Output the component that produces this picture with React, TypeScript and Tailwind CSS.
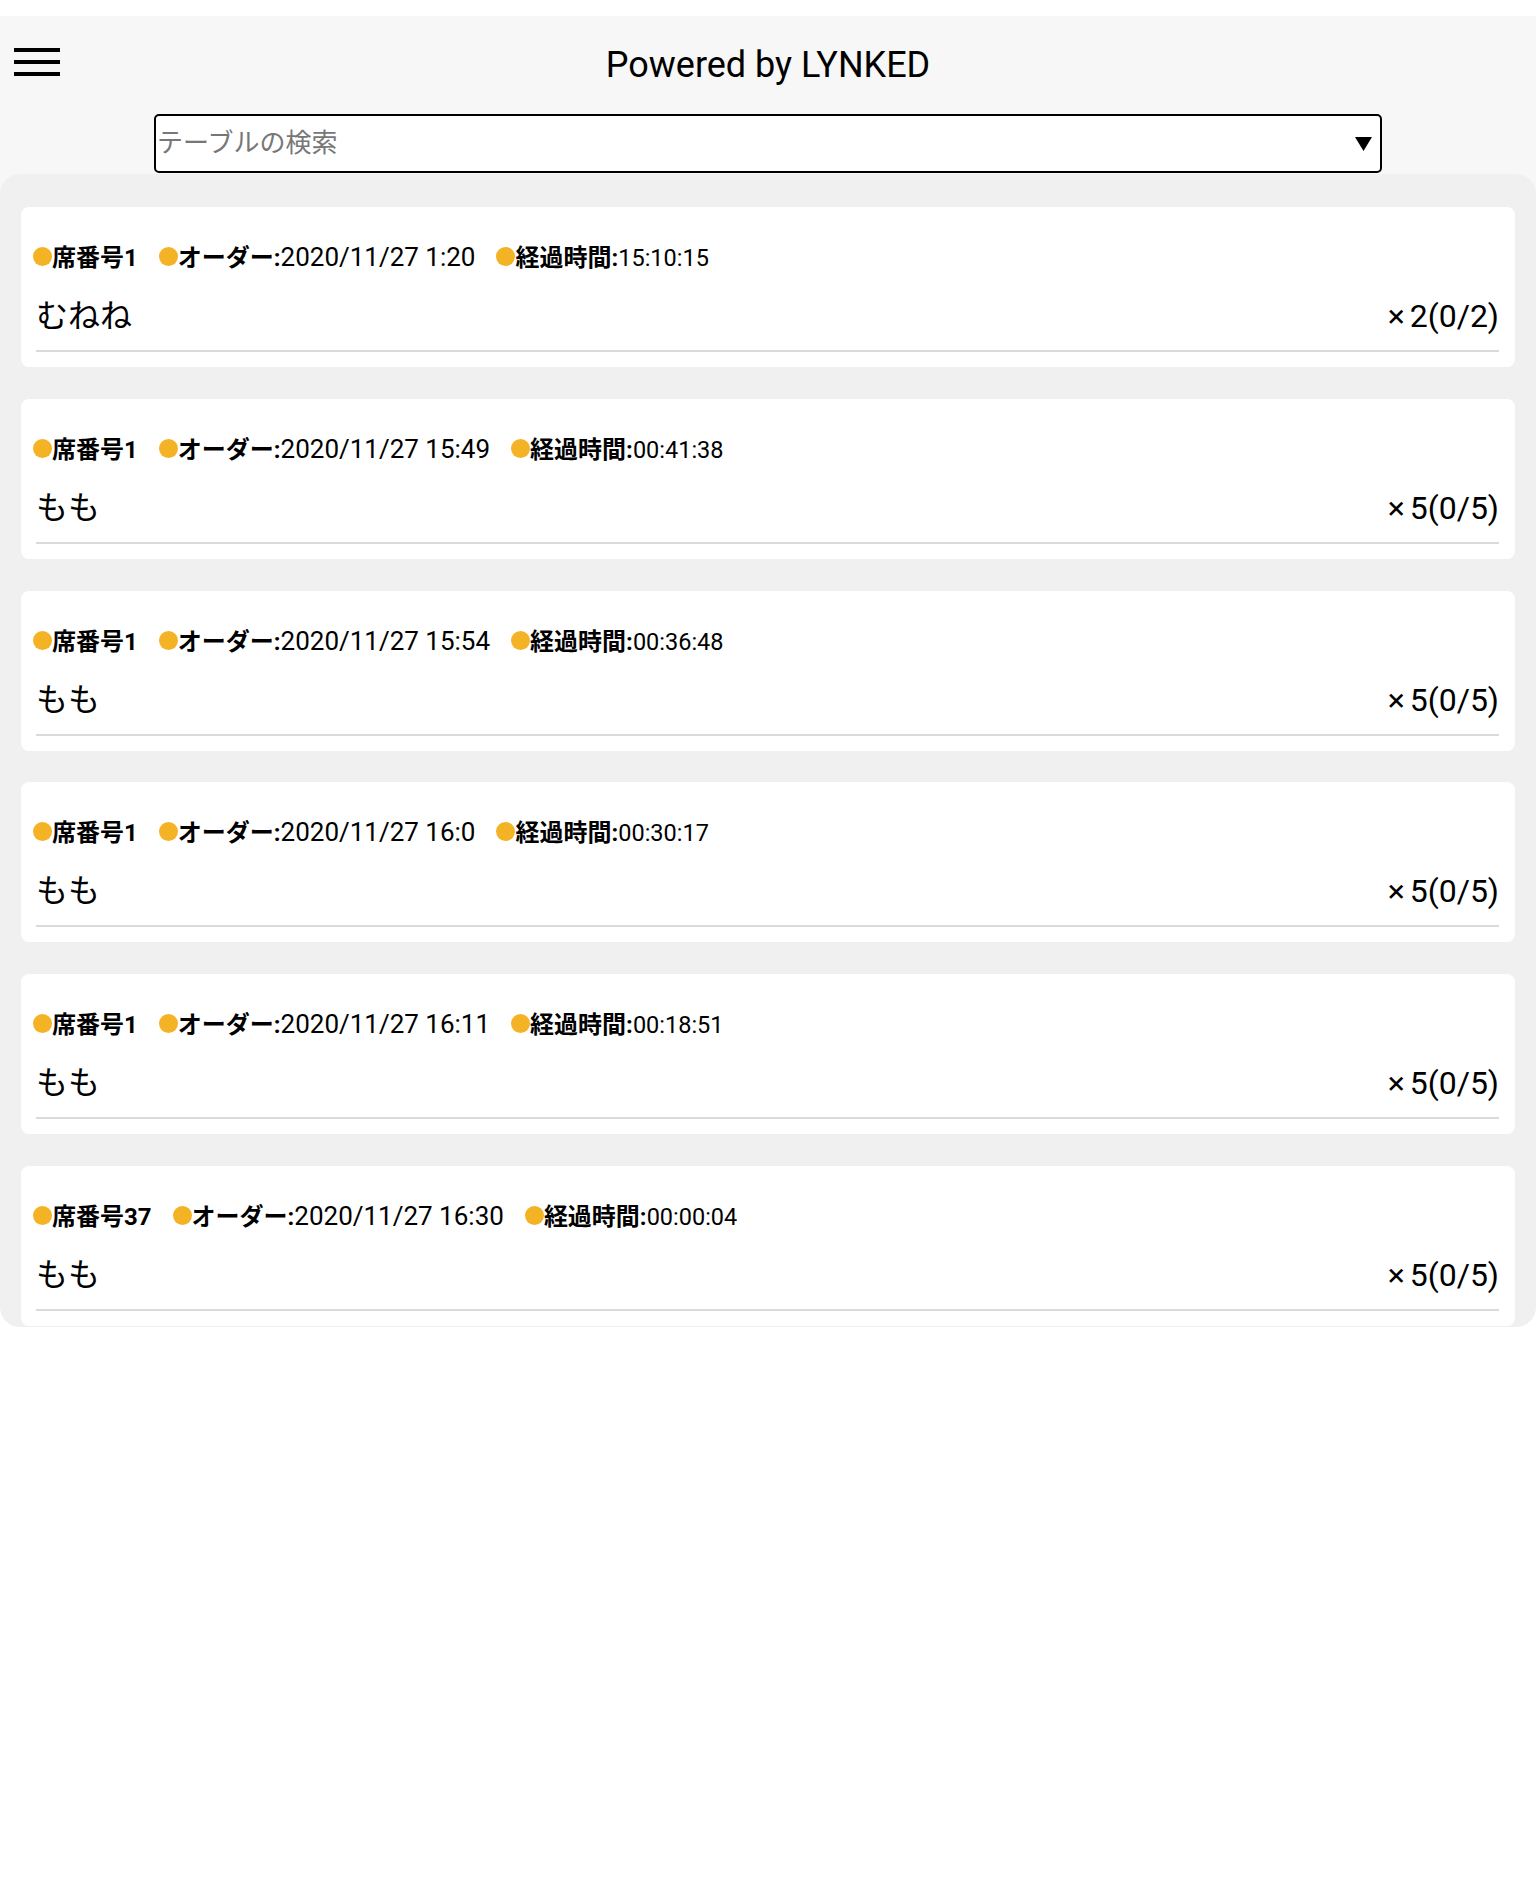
import React from "react";

interface Order {
  seat: string;
  orderedAt: string;
  elapsed: string;
  item: string;
  qty: number;
  served: number;
}

const orders: Order[] = [
  { seat: "1", orderedAt: "2020/11/27 1:20", elapsed: "15:10:15", item: "むねね", qty: 2, served: 0 },
  { seat: "1", orderedAt: "2020/11/27 15:49", elapsed: "00:41:38", item: "もも", qty: 5, served: 0 },
  { seat: "1", orderedAt: "2020/11/27 15:54", elapsed: "00:36:48", item: "もも", qty: 5, served: 0 },
  { seat: "1", orderedAt: "2020/11/27 16:0", elapsed: "00:30:17", item: "もも", qty: 5, served: 0 },
  { seat: "1", orderedAt: "2020/11/27 16:11", elapsed: "00:18:51", item: "もも", qty: 5, served: 0 },
  { seat: "37", orderedAt: "2020/11/27 16:30", elapsed: "00:00:04", item: "もも", qty: 5, served: 0 },
];

function Dot() {
  return <span className="inline-block w-[19px] h-[19px] rounded-full bg-[#f4b225]" />;
}

function OrderCard({ order }: { order: Order }) {
  return (
    <div className="bg-white rounded-[8px] h-[160px] pt-[34px] pl-[12px] pr-[16px] pb-[15px]">
      {/* meta line */}
      <div className="h-[32px] leading-[32px] whitespace-nowrap text-black">
        <Dot />
        <span className="text-[24px] font-bold">席番号{order.seat}</span>
        <span className="ml-[21px]">
          <Dot />
          <span className="text-[24px] font-bold">オーダー:</span>
          <span className="text-[26px]">{order.orderedAt}</span>
        </span>
        <span className="ml-[21px]">
          <Dot />
          <span className="text-[24px] font-bold">経過時間:</span>
          <span className="text-[23.5px]">{order.elapsed}</span>
        </span>
      </div>

      {/* item row */}
      <div className="ml-[3px] mt-[23px] pb-[14px] border-b-2 border-[#dadada] flex justify-between items-start text-black">
        <span className="text-[32px] leading-[40px]">{order.item}</span>
        <span className="text-[32px] leading-[40px]">
          <span>×</span>
          <span className="ml-[5px]">
            {order.qty}({order.served}/{order.qty})
          </span>
        </span>
      </div>
    </div>
  );
}

export default function App() {
  return (
    <div className="min-h-screen bg-white pt-[16px] font-['Roboto','Noto_Sans_CJK_JP',sans-serif]">
      {/* header */}
      <div className="bg-[#f7f7f7] pt-[27px] pb-[21px]">
        <div className="grid grid-cols-[1fr_auto_1fr] items-start">
          <button className="mt-[5px] ml-[14px] w-[46px] flex flex-col gap-[8px]">
            <span className="block h-[4px] bg-black" />
            <span className="block h-[4px] bg-black" />
            <span className="block h-[4px] bg-black" />
          </button>
          <h1 className="text-[36px] leading-[44px] h-[44px] text-black">Powered by LYNKED</h1>
          <div />
        </div>

        <div className="mt-[27px] mx-[154px] h-[59px] bg-white border-2 border-black rounded-[5px] flex items-center justify-between pl-[1px] pr-[8px]">
          <span className="text-[26px] text-[#777777]">テーブルの検索</span>
          <svg width="17" height="14" viewBox="0 0 17 14">
            <path d="M0 0 H17 L8.5 14 Z" fill="#000" />
          </svg>
        </div>
      </div>

      {/* order list */}
      <div className="-mt-[20px] bg-[#f0f0f0] rounded-[20px] px-[21px] pt-[33px] pb-[1px] flex flex-col gap-[31.8px]">
        {orders.map((o, i) => (
          <OrderCard key={i} order={o} />
        ))}
      </div>
    </div>
  );
}
